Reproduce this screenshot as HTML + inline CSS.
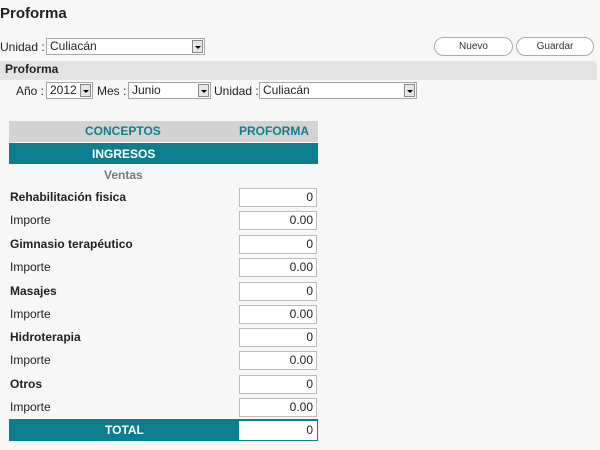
<!DOCTYPE html>
<html><head><style>
body{margin:0;width:600px;height:450px;background:#f7f7f7;font-family:"Liberation Sans",Arial,sans-serif;font-size:12px;color:#222;position:relative;overflow:hidden}
.a{position:absolute;white-space:nowrap}
.sel{position:absolute;height:17px;border:1px solid #a5a5a5;background:#fff;box-sizing:border-box;font-size:12px;line-height:15px;padding-left:3px}
.sel i{position:absolute;right:1px;top:1px;width:11px;height:13px;border:1px solid #888;background:#e6e6e6;box-sizing:border-box}
.sel i:after{content:"";position:absolute;left:2px;top:5px;border-left:3px solid transparent;border-right:3px solid transparent;border-top:3px solid #000}
.btn{position:absolute;top:37px;height:19px;border:1px solid #aaa;border-radius:10px;background:#fff;box-sizing:border-box;text-align:center;font-size:10px;line-height:17px;color:#333}
.inp{position:absolute;left:239px;width:78px;height:19px;border:1px solid #bbb;background:#fff;box-sizing:border-box;text-align:right;padding-right:3px;line-height:17px;font-size:12px}
.lb{position:absolute;left:10px;font-size:12px}
</style></head><body>
<div class="a" style="left:0;top:5px;font-size:15px;font-weight:bold">Proforma</div>
<div class="a" style="left:0;top:40px">Unidad :</div>
<div class="sel" style="left:46px;top:38px;width:159px">Culiacán<i></i></div>
<div class="btn" style="left:434px;width:79px">Nuevo</div>
<div class="btn" style="left:516px;width:78px">Guardar</div>
<div class="a" style="left:0;top:61px;width:597px;height:19px;background:#e3e3e3;border-radius:0 4px 0 0"></div>
<div class="a" style="left:5px;top:62px;font-weight:bold;font-size:12px">Proforma</div>
<div class="a" style="left:16px;top:84px">Año :</div>
<div class="sel" style="left:46px;top:82px;width:47px">2012<i></i></div>
<div class="a" style="left:97px;top:84px">Mes :</div>
<div class="sel" style="left:128px;top:82px;width:83px">Junio<i></i></div>
<div class="a" style="left:214px;top:84px">Unidad :</div>
<div class="sel" style="left:259px;top:82px;width:158px">Culiacán<i></i></div>

<div class="a" style="left:9px;top:121px;width:309px;height:21px;background:#d3d3d3"></div>
<div class="a" style="left:85px;top:124px;color:#127f8c;font-weight:bold">CONCEPTOS</div>
<div class="a" style="left:239px;top:124px;color:#127f8c;font-weight:bold">PROFORMA</div>
<div class="a" style="left:9px;top:143px;width:309px;height:21px;background:#0b7f8d"></div>
<div class="a" style="left:92px;top:147px;color:#fff;font-weight:bold">INGRESOS</div>
<div class="a" style="left:104px;top:168px;color:#777;font-weight:bold">Ventas</div>

<div class="lb" style="top:190px;font-weight:bold">Rehabilitación fisica</div><div class="inp" style="top:188px">0</div>
<div class="lb" style="top:213px">Importe</div><div class="inp" style="top:211px">0.00</div>
<div class="lb" style="top:237px;font-weight:bold">Gimnasio terapéutico</div><div class="inp" style="top:235px">0</div>
<div class="lb" style="top:260px">Importe</div><div class="inp" style="top:258px">0.00</div>
<div class="lb" style="top:284px;font-weight:bold">Masajes</div><div class="inp" style="top:282px">0</div>
<div class="lb" style="top:307px">Importe</div><div class="inp" style="top:305px">0.00</div>
<div class="lb" style="top:330px;font-weight:bold">Hidroterapia</div><div class="inp" style="top:328px">0</div>
<div class="lb" style="top:353px">Importe</div><div class="inp" style="top:351px">0.00</div>
<div class="lb" style="top:377px;font-weight:bold">Otros</div><div class="inp" style="top:375px">0</div>
<div class="lb" style="top:400px">Importe</div><div class="inp" style="top:398px">0.00</div>
<div class="a" style="left:9px;top:419px;width:309px;height:22px;background:#0b7f8d"></div>
<div class="a" style="left:105px;top:423px;color:#fff;font-weight:bold">TOTAL</div>
<div class="inp" style="top:421px;border-color:#fff">0</div>
</body></html>
